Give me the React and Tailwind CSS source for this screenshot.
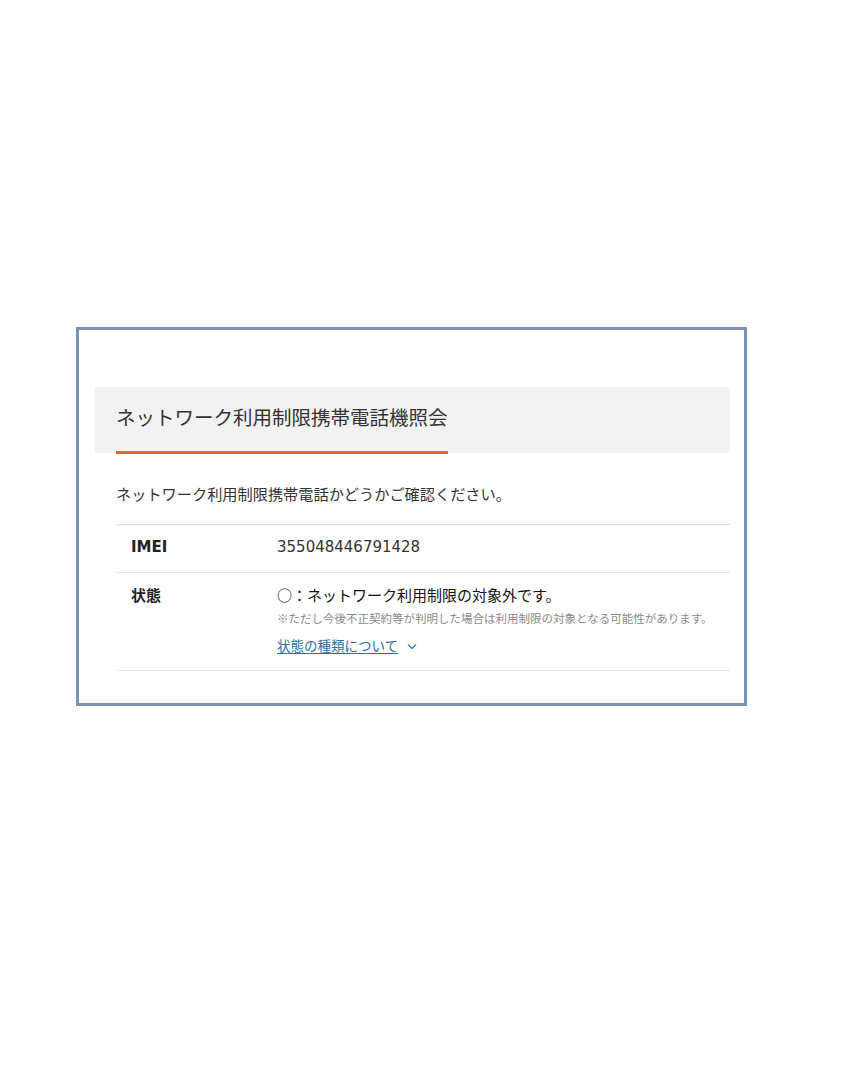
export default function App() {
  const jp = { fontFamily: '"Noto Sans CJK JP", "Liberation Sans", sans-serif' };
  return (
    <div className="min-h-[1080px] w-[852px] bg-white text-[#333]" style={jp}>
      <div className="pt-[327px] pl-[76px]">
        <div className="w-[671px] h-[379px] border-[3px] border-[#7b93b1] bg-white pt-[57px] pl-[16px] pr-[14px]">
          <div className="bg-[#f2f2f2] h-[66px] pl-[21px] pt-[15px]">
            <span className="inline-block text-[19.5px] leading-[30px] text-[#333] pb-[19px] border-b-[3px] border-[#e0662a]">
              ネットワーク利用制限携帯電話機照会
            </span>
          </div>
          <div className="pl-[21px]">
            <p className="mt-[28px] text-[15.2px] leading-[24px] text-[#333]">
              ネットワーク利用制限携帯電話かどうかご確認ください。
            </p>
            <div className="mt-[19px] border-t border-[#dcdcdc]">
              <div className="flex border-b border-[#e6e6e6] pt-[10px] pb-[13px]">
                <div className="w-[161px] pl-[15px] text-[15px] leading-[24px] font-bold text-[#222]" style={{ fontFamily: '"DejaVu Sans", sans-serif' }}>
                  IMEI
                </div>
                <div className="text-[15px] leading-[24px] text-[#333]" style={{ fontFamily: '"DejaVu Sans", sans-serif' }}>
                  355048446791428
                </div>
              </div>
              <div className="flex border-b border-[#e6e6e6] pt-[10px] pb-[14px]">
                <div className="w-[161px] pl-[15px] text-[15px] leading-[24px] font-bold text-[#222]">
                  状態
                </div>
                <div className="flex flex-col">
                  <div className="text-[15px] leading-[24px] text-[#111]">
                    ○：ネットワーク利用制限の対象外です。
                  </div>
                  <div className="mt-[2px] text-[11.5px] leading-[18px] text-[#8a8a8a]">
                    ※ただし今後不正契約等が判明した場合は利用制限の対象となる可能性があります。
                  </div>
                  <div className="mt-[7px] flex items-center text-[13.5px] leading-[22px]">
                    <a href="#" className="text-[#2c6fa3] underline underline-offset-2">
                      状態の種類について
                    </a>
                    <svg className="ml-[9px] mt-[2px]" width="10" height="7" viewBox="0 0 10 7" fill="none">
                      <path d="M1 1.5 L5 5.5 L9 1.5" stroke="#3a7db3" strokeWidth="1.3" />
                    </svg>
                  </div>
                </div>
              </div>
            </div>
          </div>
        </div>
      </div>
    </div>
  );
}
